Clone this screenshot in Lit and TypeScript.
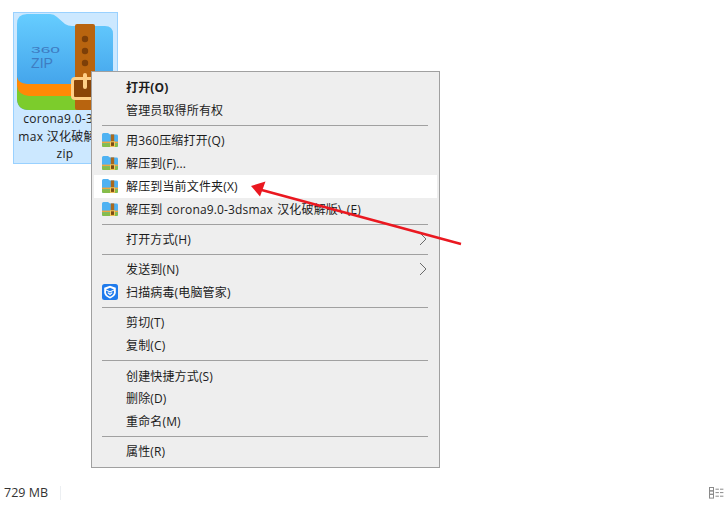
import { LitElement, html, css, svg } from "lit";
import { customElement } from "lit/decorators.js";

const bigZip = svg`
  <defs>
    <linearGradient id="bluebig" x1="0" y1="0" x2="0" y2="1">
      <stop offset="0" stop-color="#66cdff"/><stop offset="1" stop-color="#3896e4"/>
    </linearGradient>
  </defs>
  <path d="M0 10Q0 0 10 0H33Q37 0 40 3L48 10Q51 12 55 12H88Q96 12 96 20V84Q96 96 84 96H12Q0 96 0 84Z" fill="url(#bluebig)"/>
  <path d="M0 70Q0 80 10 81H96V96H12Q0 96 0 84Z" fill="#7ccc2c"/>
  <path d="M0 63Q1 69 10 70H96V82H12Q1 81 0 72Z" fill="#ff8a06"/>
  <rect x="58" y="10" width="20" height="86" fill="#b8640f" rx="2"/>
  <circle cx="68" cy="25" r="3.2" fill="#7d3f08"/>
  <circle cx="68" cy="37" r="3.2" fill="#7d3f08"/>
  <circle cx="68" cy="49" r="3.2" fill="#7d3f08"/>
  <rect x="55.5" y="64.5" width="25" height="20" rx="2.5" fill="#8a4507" stroke="#ffcf85" stroke-width="3"/>
  <rect x="66" y="59" width="4" height="16" rx="2" fill="#ffcf85"/>
  <text x="14" y="38.8" font-family="'Liberation Sans',sans-serif" font-size="9.5" fill="#3f7cc2" textLength="29" lengthAdjust="spacingAndGlyphs">360</text>
  <text x="14" y="53.5" font-family="'Liberation Sans',sans-serif" font-size="14" fill="#3f7cc2" textLength="22" lengthAdjust="spacingAndGlyphs">ZIP</text>
`;

const miniZip = svg`
  <path d="M0 1.5Q0 0 1.5 0H6L8 1.6H14.5Q16 1.6 16 3V12.5Q16 14 14.5 14H1.5Q0 14 0 12.5Z" fill="#4fb2f2"/>
  <rect x="0" y="8.6" width="16" height="1.6" fill="#f2a63a"/>
  <path d="M0 10.2H16V12.5Q16 14 14.5 14H1.5Q0 14 0 12.5Z" fill="#86bd4a"/>
  <rect x="8.8" y="1.4" width="3.4" height="12.6" fill="#a9691e"/>
  <rect x="8.5" y="8.8" width="4" height="4.6" fill="#7b4a14" stroke="#f6c95e" stroke-width="1"/>
`;

type Row = { t: string; icon?: "zip" | "shield"; bold?: boolean; more?: boolean; hot?: boolean } | null;

const rows: Row[] = [
  { t: "打开(O)", bold: true },
  { t: "管理员取得所有权" },
  null,
  { t: "用360压缩打开(Q)", icon: "zip" },
  { t: "解压到(F)...", icon: "zip" },
  { t: "解压到当前文件夹(X)", icon: "zip", hot: true },
  { t: "解压到 corona9.0-3dsmax 汉化破解版\\ (E)", icon: "zip" },
  null,
  { t: "打开方式(H)", more: true },
  null,
  { t: "发送到(N)", more: true },
  { t: "扫描病毒(电脑管家)", icon: "shield" },
  null,
  { t: "剪切(T)" },
  { t: "复制(C)" },
  null,
  { t: "创建快捷方式(S)" },
  { t: "删除(D)" },
  { t: "重命名(M)" },
  null,
  { t: "属性(R)" },
];

@customElement("app-root")
export class AppRoot extends LitElement {
  static styles = css`
    :host {
      display: block;
      width: 724px;
      height: 505px;
      background: #fff;
      font-family: "Open Sans", "Noto Sans CJK SC", sans-serif;
      color: #1c1c1c;
      overflow: hidden;
    }
    .page {
      position: relative;
      height: 505px;
      display: flex;
      flex-direction: column;
      justify-content: space-between;
    }
    .tile {
      box-sizing: border-box;
      margin: 12px 0 0 13px;
      width: 105px;
      height: 152px;
      background: #cce8ff;
      border: 1px solid #99d1ff;
      display: flex;
      flex-direction: column;
      align-items: flex-start;
      padding: 1px 0 0 3px;
    }
    .bigicon {
      width: 96px;
      height: 96px;
      display: block;
    }
    .label {
      width: 96px;
      text-align: center;
      font-size: 12px;
      line-height: 17.5px;
      letter-spacing: 0.3px;
      white-space: nowrap;
    }
    .status {
      height: 24px;
      display: flex;
      align-items: center;
      justify-content: space-between;
      padding: 0 0 0 4px;
      font-size: 12.5px;
      color: #333;
    }
    .size {
      width: 56px;
      border-right: 1px solid #eceff2;
      line-height: 14px;
    }
    .view {
      width: 15px;
      height: 12px;
      display: block;
    }
    .menu {
      position: absolute;
      left: 91px;
      top: 71px;
      box-sizing: border-box;
      width: 349px;
      height: 397px;
      padding: 4.2px 2px 0;
      background: #eeeeee;
      border: 1px solid #a0a0a0;
      font-size: 12px;
      letter-spacing: 0.15px;
      word-spacing: 1px;
    }
    .row {
      box-sizing: border-box;
      height: 22.75px;
      display: flex;
      align-items: center;
      padding: 0 10px 0.5px 8px;
      white-space: nowrap;
    }
    .row.hot {
      background: #fff;
    }
    .row.bold {
      font-weight: 700;
    }
    .slot {
      width: 16px;
      height: 16px;
      margin-right: 8px;
      flex: none;
      display: flex;
      align-items: center;
    }
    .slot svg {
      display: block;
      width: 16px;
    }
    .text {
      flex: 1;
    }
    .chev {
      width: 8px;
      height: 14px;
      display: block;
    }
    .sep {
      height: 1px;
      background: #a0a0a0;
      margin: 3.3px 9px 3.3px 8px;
    }
    .arrow {
      position: absolute;
      left: 0;
      top: 0;
      width: 724px;
      height: 505px;
      pointer-events: none;
    }
  `;

  private slot(icon?: "zip" | "shield") {
    if (icon === "zip")
      return html`<svg viewBox="0 0 16 14" height="14">${miniZip}</svg>`;
    if (icon === "shield")
      return html`<svg viewBox="0 0 16 16" height="16">
        <rect width="16" height="16" rx="2.5" fill="#1f7bec" />
        <path d="M8 1.8 13.8 3.8v4.4C13.8 11 11 13.2 8 14.4 5 13.2 2.2 11 2.2 8.2V3.8Z" fill="#fff" />
        <path d="M4 5.4 8 3.8l4 1.6-4 1.8Z" fill="#1f7bec" />
        <path d="M4 6.6 8 8.4l4-1.8v1.6C12 10.4 10 11.8 8 12.7 6 11.8 4 10.4 4 8.2Z" fill="#1f7bec" />
        <path d="M5.8 8.6 8 10.4l2.2-1.8" fill="none" stroke="#fff" stroke-width="1.2" />
      </svg>`;
    return null;
  }

  render() {
    return html`<div class="page">
      <div class="tile">
        <svg class="bigicon" viewBox="0 0 96 96">${bigZip}</svg>
        <div class="label">corona9.0-3ds<br />max 汉化破解版.<br />zip</div>
      </div>

      <div class="status">
        <div class="size">729 MB</div>
        <svg class="view" viewBox="0 0 15 12">
          <g fill="none" stroke="#8a8a8a">
            <rect x="0.5" y="0.5" width="4" height="3.4" />
            <rect x="0.5" y="3.9" width="4" height="3.4" />
            <rect x="0.5" y="7.3" width="4" height="3.8" />
            <path d="M6.5 2.2h3.4M11 2.2h3.4M6.5 5.6h3.4M11 5.6h3.4M6.5 9.2h3.4M11 9.2h3.4" />
          </g>
        </svg>
      </div>

      <div class="menu">
        ${rows.map((r) =>
          r === null
            ? html`<div class="sep"></div>`
            : html`<div class="row ${r.hot ? "hot" : ""} ${r.bold ? "bold" : ""}">
                <span class="slot">${this.slot(r.icon)}</span>
                <span class="text">${r.t}</span>
                ${r.more
                  ? html`<svg class="chev" viewBox="0 0 8 14">
                      <path d="M1 1 7 7 1 13" fill="none" stroke="#6a6a6a" />
                    </svg>`
                  : null}
              </div>`
        )}
      </div>

      <svg class="arrow" viewBox="0 0 724 505">
        <path d="M461 244 258 189" stroke="#ea1820" stroke-width="2.6" fill="none" />
        <path d="M251 186 265.5 181.5 260 196.5Z" fill="#ea1820" />
      </svg>
    </div>`;
  }
}
